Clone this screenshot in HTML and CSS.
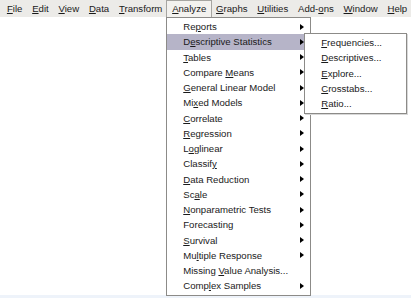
FILE: index.html
```html
<!DOCTYPE html>
<html>
<head>
<meta charset="utf-8">
<link rel="stylesheet" href="styles.css">
</head>
<body>
<div class="app">
  <nav class="menubar">
    <span class="mi"><u>F</u>ile</span>
    <span class="mi"><u>E</u>dit</span>
    <span class="mi"><u>V</u>iew</span>
    <span class="mi"><u>D</u>ata</span>
    <span class="mi"><u>T</u>ransform</span>
    <span class="mi open"><u>A</u>nalyze
      <div class="dropdown">
        <div class="row"><span>Re<u>p</u>orts</span><i class="arr"></i></div>
        <div class="row hl"><span>D<u>e</u>scriptive Statistics</span><i class="arr"></i></div>
        <div class="row"><span><u>T</u>ables</span><i class="arr"></i></div>
        <div class="row"><span>Compare <u>M</u>eans</span><i class="arr"></i></div>
        <div class="row"><span><u>G</u>eneral Linear Model</span><i class="arr"></i></div>
        <div class="row"><span>Mi<u>x</u>ed Models</span><i class="arr"></i></div>
        <div class="row"><span><u>C</u>orrelate</span><i class="arr"></i></div>
        <div class="row"><span><u>R</u>egression</span><i class="arr"></i></div>
        <div class="row"><span>L<u>o</u>glinear</span><i class="arr"></i></div>
        <div class="row"><span>Classif<u>y</u></span><i class="arr"></i></div>
        <div class="row"><span><u>D</u>ata Reduction</span><i class="arr"></i></div>
        <div class="row"><span>Sc<u>a</u>le</span><i class="arr"></i></div>
        <div class="row"><span><u>N</u>onparametric Tests</span><i class="arr"></i></div>
        <div class="row"><span>Forecasting</span><i class="arr"></i></div>
        <div class="row"><span><u>S</u>urvival</span><i class="arr"></i></div>
        <div class="row"><span>Mu<u>l</u>tiple Response</span><i class="arr"></i></div>
        <div class="row"><span>Missing <u>V</u>alue Analysis...</span></div>
        <div class="row"><span>Comp<u>l</u>ex Samples</span><i class="arr"></i></div>
      </div>
      <div class="submenu">
        <div class="row"><span><u>F</u>requencies...</span></div>
        <div class="row"><span><u>D</u>escriptives...</span></div>
        <div class="row"><span><u>E</u>xplore...</span></div>
        <div class="row"><span><u>C</u>rosstabs...</span></div>
        <div class="row"><span><u>R</u>atio...</span></div>
      </div>
    </span>
    <span class="mi"><u>G</u>raphs</span>
    <span class="mi"><u>U</u>tilities</span>
    <span class="mi">Add-<u>o</u>ns</span>
    <span class="mi"><u>W</u>indow</span>
    <span class="mi"><u>H</u>elp</span>
  </nav>
  <main class="workspace"></main>
  <div class="strip"></div>
</div>
</body>
</html>
```
FILE: styles.css
```css
* { box-sizing: border-box; }
html, body { margin: 0; padding: 0; background: #ffffff; }
body {
  font-family: "Liberation Sans", Arial, sans-serif;
  font-size: 9.6px;
  color: #1a1a1a;
}
u { text-decoration: underline; text-underline-offset: 1px; }
.app {
  width: 411px;
  height: 298px;
  display: flex;
  flex-direction: column;
  overflow: hidden;
}
.menubar {
  display: flex;
  height: 17px;
  align-items: stretch;
  background: #ecebe8;
  padding-left: 2px;
  flex: none;
  position: relative;
  z-index: 2;
}
.mi {
  flex: none;
  padding: 0 4.9px;
  line-height: 16px;
  white-space: nowrap;
  position: relative;
  border: 1px solid transparent;
  border-bottom: none;
  margin: 0 -1px;
}
.mi.open {
  background: #f3f2ef;
  border-color: #a6a5a1;
}
.workspace { flex: 1; }
.strip { height: 3px; background: #eef3fa; flex: none; }

.dropdown {
  position: absolute;
  left: -1px;
  top: 16px;
  width: 145px;
  background: #fff;
  border: 1px solid #8c8b88;
  padding: 1px 0 1px 0;
  line-height: 15.25px;
}
.submenu {
  position: absolute;
  left: 137px;
  top: 32px;
  width: 103px;
  background: #fff;
  border: 1px solid #8c8b88;
  padding: 1px 0 2px 0;
  line-height: 15.25px;
  box-shadow: 1px 1px 0 #d8d8d8;
}
.row {
  display: flex;
  align-items: center;
  justify-content: space-between;
  height: 15.25px;
  padding: 0 6px 0 16px;
  white-space: nowrap;
}
.row.hl { background: #b6b4c8; }
.arr {
  width: 0;
  height: 0;
  border-top: 3.5px solid transparent;
  border-bottom: 3.5px solid transparent;
  border-left: 4px solid #000;
}
```
